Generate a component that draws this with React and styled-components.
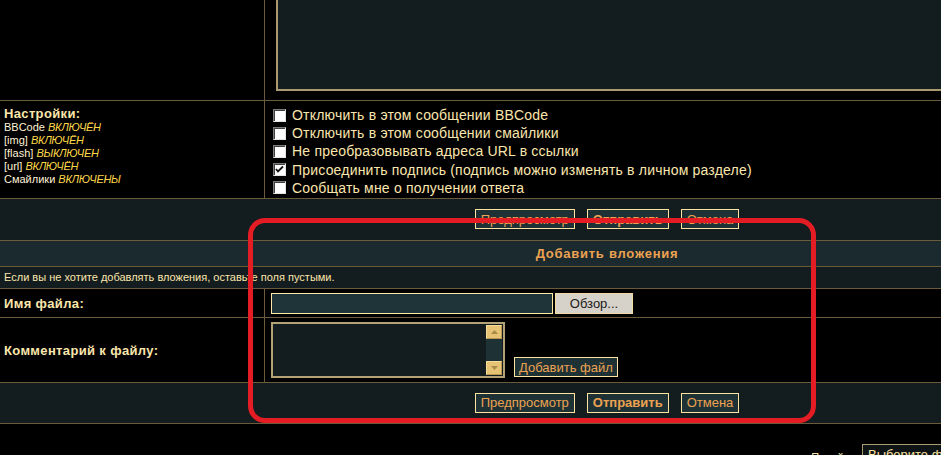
import React from "react";
import styled, { createGlobalStyle } from "styled-components";

const GlobalStyle = createGlobalStyle`
  html, body {
    margin: 0;
    padding: 0;
    background: #000000;
    overflow: hidden;
  }
  body {
    font-family: "Liberation Sans", Arial, sans-serif;
  }
`;

const LINE = "#6b5b3b";
const CREAM = "#fbe6ad";
const ORANGE = "#eca252";

const Page = styled.div`
  position: relative;
  width: 1214px;
  margin-top: -40px;
`;

const Row = styled.div`
  display: grid;
  grid-template-columns: ${({ $full }) => ($full ? "1fr" : "265px 1fr")};
  border-bottom: 1px solid ${LINE};
  background: ${({ $bg }) => $bg || "#000000"};
  min-height: ${({ $h }) => $h}px;
`;

const LeftCell = styled.div`
  border-right: 1px solid ${LINE};
  padding: ${({ $pad }) => $pad || "0 4px"};
  display: flex;
  flex-direction: column;
  justify-content: ${({ $top }) => ($top ? "flex-start" : "center")};
`;

const RightCell = styled.div`
  padding: ${({ $pad }) => $pad || "0 6px"};
  display: flex;
  flex-direction: ${({ $col }) => ($col ? "column" : "row")};
  align-items: ${({ $align }) => $align || "center"};
`;

const MessageBox = styled.div`
  width: 1000px;
  height: 131px;
  box-sizing: border-box;
  border: 2px solid #ab9a70;
  background: #131c1e;
`;

const Label = styled.div`
  font-weight: bold;
  font-size: 13px;
  letter-spacing: 0.35px;
  color: ${CREAM};
`;

const Options = styled.div`
  font-size: 11px;
  line-height: 13px;
  color: #fff3d6;
`;

const OptValue = styled.i`
  color: #ffd84a;
  letter-spacing: -0.3px;
`;

const CheckRow = styled.label`
  display: flex;
  align-items: center;
  height: 18.2px;
  font-size: 14px;
  letter-spacing: 0.2px;
  color: ${CREAM};
`;

const Box = styled.span`
  width: 13px;
  height: 13px;
  box-sizing: border-box;
  margin: 0 6px 0 2px;
  background: #ffffff;
  border: 1px solid;
  border-color: #7b7b7b #e4e4e4 #e4e4e4 #7b7b7b;
  box-shadow: inset 1px 1px 0 #404040;
  display: flex;
  align-items: center;
  justify-content: center;
`;

const Buttons = styled.div`
  display: flex;
  justify-content: center;
  align-items: center;
  gap: 12px;
  height: ${({ $h }) => $h}px;
`;

const Button = styled.button`
  font-family: "Liberation Sans", Arial, sans-serif;
  font-size: 13px;
  font-weight: ${({ $bold }) => ($bold ? "bold" : "normal")};
  color: ${ORANGE};
  background: #1e3236;
  border: 1px solid #ffe3a0;
  height: 20px;
  padding: 0 5px;
  margin: 0;
  line-height: 17px;
`;

const Header = styled.div`
  text-align: center;
  font-size: 13px;
  font-weight: bold;
  color: ${ORANGE};
  line-height: 25px;
  letter-spacing: 0.75px;
`;

const Note = styled.div`
  font-size: 11px;
  color: ${CREAM};
  padding: 0 4px;
  line-height: 21px;
`;

const FileInput = styled.div`
  width: 282px;
  height: 21px;
  box-sizing: border-box;
  background: #1e3438;
  border: 1px solid #ffe7a4;
`;

const BrowseButton = styled.button`
  font-family: "Liberation Sans", Arial, sans-serif;
  font-size: 13px;
  color: #1a1a1a;
  background: #d6d1c9;
  border: 1px solid #f0dca0;
  width: 78px;
  height: 21px;
  margin: 0 0 0 2px;
  padding: 0;
`;

const CommentBox = styled.div`
  width: 234px;
  height: 56px;
  box-sizing: border-box;
  border: 2px solid #b3a276;
  background: #131c1e;
  display: flex;
  justify-content: flex-end;
`;

const ScrollBar = styled.div`
  width: 16px;
  display: flex;
  flex-direction: column;
  justify-content: space-between;
  background: #1e3236;
  margin: 1px 1px 1px 0;
`;

const ScrollBtn = styled.div`
  height: 14px;
  background: #e6c274;
  border: 1px solid;
  border-color: #f4dc9c #b89650 #b89650 #f4dc9c;
  box-sizing: border-box;
  display: flex;
  align-items: center;
  justify-content: center;
`;

const AddButton = styled(Button)`
  margin-left: 9px;
  margin-bottom: 1px;
  padding: 0 4px;
`;

const JumpRow = styled.div`
  width: 962px;
  display: flex;
  justify-content: flex-end;
  align-items: flex-start;
  margin-top: 20px;
  font-size: 11px;
  color: ${CREAM};
  gap: 4px;
`;

const JumpLabel = styled.span`
  padding-top: 7px;
`;

const JumpSelect = styled.div`
  width: 100px;
  height: 22px;
  box-sizing: border-box;
  border: 1px solid #ab9a70;
  background: #0e1416;
  color: #ffe3a0;
  font-size: 13px;
  padding: 2px 0 0 5px;
  white-space: nowrap;
  overflow: hidden;
`;

const Highlight = styled.div`
  position: absolute;
  left: 248px;
  top: 258px;
  width: 568px;
  height: 205px;
  box-sizing: border-box;
  border: 5px solid #e41c24;
  border-radius: 17px;
  pointer-events: none;
`;

const Check = ({ checked, children }) => (
  <CheckRow>
    <Box>
      {checked && (
        <svg width="9" height="9" viewBox="0 0 9 9">
          <path d="M1 4 L3 6.5 L8 1.5" stroke="#111" strokeWidth="1.8" fill="none" />
        </svg>
      )}
    </Box>
    {children}
  </CheckRow>
);

const Arrow = ({ up }) => (
  <svg width="7" height="4" viewBox="0 0 7 4">
    <path d={up ? "M0 4 L3.5 0 L7 4 Z" : "M0 0 L3.5 4 L7 0 Z"} fill="#a88a48" />
  </svg>
);

const ActionButtons = ({ h }) => (
  <Buttons $h={h}>
    <Button>Предпросмотр</Button>
    <Button $bold>Отправить</Button>
    <Button>Отмена</Button>
  </Buttons>
);

export default function App() {
  return (
    <>
      <GlobalStyle />
      <Page>
        <Row $h={139}>
          <LeftCell />
          <RightCell $pad="0 0 9px 11px" $align="flex-end">
            <MessageBox />
          </RightCell>
        </Row>

        <Row $h={97}>
          <LeftCell $top $pad="5px 4px 0">
            <Label>Настройки:</Label>
            <Options>
              <div>BBCode <OptValue>ВКЛЮЧЁН</OptValue></div>
              <div>[img] <OptValue>ВКЛЮЧЁН</OptValue></div>
              <div>[flash] <OptValue>ВЫКЛЮЧЕН</OptValue></div>
              <div>[url] <OptValue>ВКЛЮЧЁН</OptValue></div>
              <div>Смайлики <OptValue>ВКЛЮЧЕНЫ</OptValue></div>
            </Options>
          </LeftCell>
          <RightCell $col $align="flex-start" $pad="5px 6px 0">
            <Check>Отключить в этом сообщении BBCode</Check>
            <Check>Отключить в этом сообщении смайлики</Check>
            <Check>Не преобразовывать адреса URL в ссылки</Check>
            <Check checked>Присоединить подпись (подпись можно изменять в личном разделе)</Check>
            <Check>Сообщать мне о получении ответа</Check>
          </RightCell>
        </Row>

        <Row $full $bg="#131c1e" $h={41}>
          <ActionButtons h={40} />
        </Row>

        <Row $full $bg="#1b2a2e" $h={25}>
          <Header>Добавить вложения</Header>
        </Row>

        <Row $full $bg="#131c1e" $h={21}>
          <Note>Если вы не хотите добавлять вложения, оставьте поля пустыми.</Note>
        </Row>

        <Row $h={28}>
          <LeftCell>
            <Label>Имя файла:</Label>
          </LeftCell>
          <RightCell>
            <FileInput />
            <BrowseButton>Обзор...</BrowseButton>
          </RightCell>
        </Row>

        <Row $h={64}>
          <LeftCell>
            <Label>Комментарий к файлу:</Label>
          </LeftCell>
          <RightCell $align="flex-end" $pad="0 6px 4px">
            <CommentBox>
              <ScrollBar>
                <ScrollBtn>
                  <Arrow up />
                </ScrollBtn>
                <ScrollBtn>
                  <Arrow />
                </ScrollBtn>
              </ScrollBar>
            </CommentBox>
            <AddButton>Добавить файл</AddButton>
          </RightCell>
        </Row>

        <Row $full $bg="#131c1e" $h={40}>
          <ActionButtons h={39} />
        </Row>

        <JumpRow>
          <JumpLabel>Перейти:</JumpLabel>
          <JumpSelect>Выберите форум</JumpSelect>
        </JumpRow>

        <Highlight />
      </Page>
    </>
  );
}
